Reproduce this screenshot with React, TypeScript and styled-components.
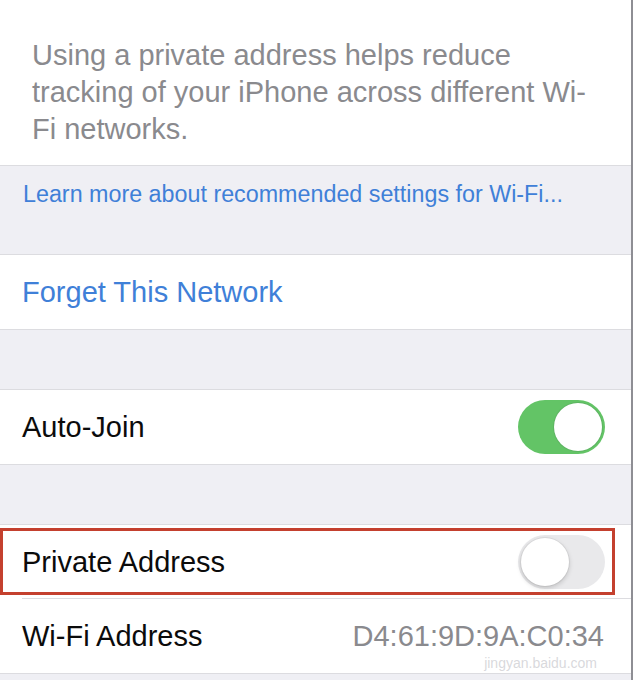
import React from "react";
import styled, { createGlobalStyle } from "styled-components";

const Global = createGlobalStyle`
  html, body { margin: 0; padding: 0; background: #efeff4; }
  body { font-family: "Liberation Sans", Arial, sans-serif; -webkit-font-smoothing: antialiased; }
`;

const Screen = styled.div`
  width: 631px;
  height: 680px;
  overflow: hidden;
  background: #efeff4;
  border-right: 2px solid #8e8e94;
  display: flex;
  flex-direction: column;
  position: relative;
`;

const FooterNote = styled.div`
  background: #ffffff;
  padding: 37px 20px 17px 32px;
  color: #8a8a8e;
  font-size: 29px;
  line-height: 37px;
  border-bottom: 1px solid #dcdce0;
`;

const LinkArea = styled.div`
  height: 88px;
  padding: 14px 0 0 23px;
  box-sizing: border-box;
  color: #3f80d8;
  font-size: 23.3px;
  line-height: 28px;
`;

const Group = styled.div<{ $gap: number }>`
  margin-top: ${(p) => p.$gap}px;
  background: #ffffff;
  border-top: 1px solid #dcdce0;
  border-bottom: 1px solid #dcdce0;
  display: flex;
  flex-direction: column;
`;

const Row = styled.div<{ $inset?: boolean }>`
  position: relative;
  height: 74px;
  padding: 0 26px 0 22px;
  display: flex;
  align-items: center;
  justify-content: space-between;
  font-size: 29px;
  color: #0b0b0b;
  ${(p) =>
    p.$inset
      ? `&::after { content: ""; position: absolute; left: 22px; right: 0; bottom: 0; height: 1px; background: #dcdce0; }`
      : ""}
`;

const ActionLabel = styled.span`
  color: #3f80d8;
`;

const Value = styled.span`
  color: #8a8a8e;
  margin-right: 1px;
`;

const Track = styled.div<{ $on: boolean }>`
  width: 87px;
  height: 54px;
  border-radius: 27px;
  box-sizing: border-box;
  background: ${(p) => (p.$on ? "#63c466" : "#e9e9eb")};
  display: flex;
  align-items: center;
  justify-content: ${(p) => (p.$on ? "flex-end" : "flex-start")};
  padding: 3px;
`;

const Knob = styled.div<{ $on: boolean }>`
  width: 48px;
  height: 48px;
  border-radius: 50%;
  background: #ffffff;
  box-shadow: ${(p) =>
    p.$on
      ? "0 0 0 1px rgba(90,170,95,0.6)"
      : "0 2px 5px rgba(0,0,0,0.18), 0 0 0 1px rgba(0,0,0,0.05)"};
`;

const Highlight = styled.div`
  position: absolute;
  left: 0;
  top: 3px;
  width: 615px;
  height: 67px;
  box-sizing: border-box;
  border: 3px solid #c4402e;
  pointer-events: none;
`;

const Watermark = styled.div`
  position: absolute;
  right: 34px;
  bottom: 10px;
  font-family: "Liberation Sans", Arial, sans-serif;
  font-size: 14px;
  line-height: 14px;
  color: rgba(200, 200, 205, 0.7);
  pointer-events: none;
`;

const Toggle = ({ on }: { on: boolean }) => (
  <Track $on={on}>
    <Knob $on={on} />
  </Track>
);

export default function App() {
  return (
    <>
      <Global />
      <Screen>
        <FooterNote>
          Using a private address helps reduce
          <br />
          tracking of your iPhone across different Wi-
          <br />
          Fi networks.
        </FooterNote>
        <LinkArea>Learn more about recommended settings for Wi-Fi...</LinkArea>
        <Group $gap={0}>
          <Row>
            <ActionLabel>Forget This Network</ActionLabel>
          </Row>
        </Group>
        <Group $gap={59}>
          <Row>
            <span>Auto-Join</span>
            <Toggle on />
          </Row>
        </Group>
        <Group $gap={59}>
          <Row $inset>
            <span>Private Address</span>
            <Toggle on={false} />
            <Highlight />
          </Row>
          <Row>
            <span>Wi-Fi Address</span>
            <Value>D4:61:9D:9A:C0:34</Value>
          </Row>
        </Group>
        <Watermark>jingyan.baidu.com</Watermark>
      </Screen>
    </>
  );
}
